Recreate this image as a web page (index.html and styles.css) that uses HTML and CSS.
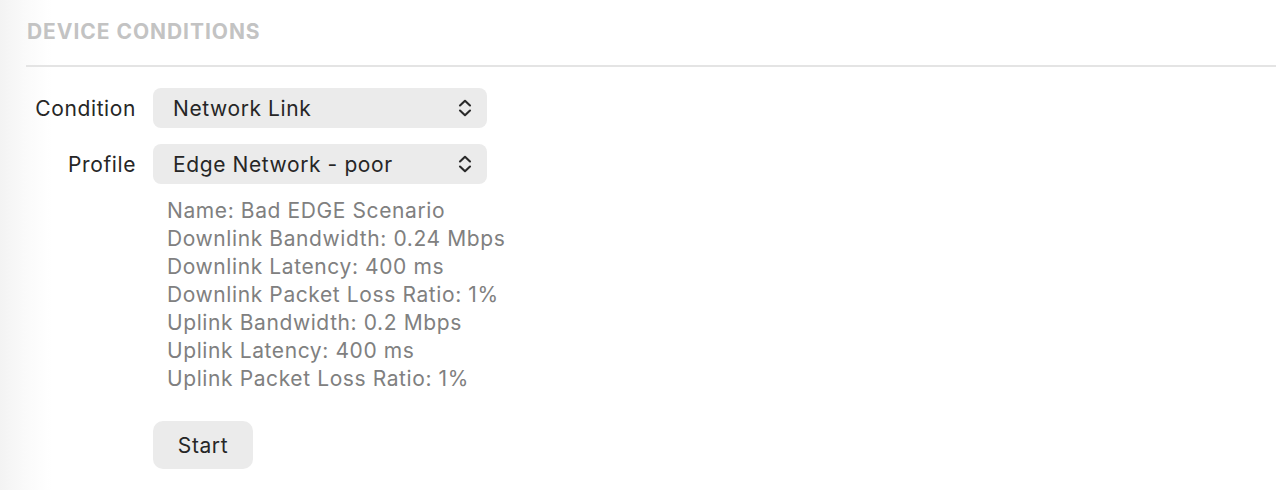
FILE: index.html
```html
<!DOCTYPE html>
<html>
<head>
<meta charset="utf-8">
<link rel="stylesheet" href="styles.css">
</head>
<body>
<div class="page">
  <h2 class="title">DEVICE CONDITIONS</h2>
  <div class="divider"></div>
  <div class="form">
    <div class="row">
      <span class="label">Condition</span>
      <div class="select"><span>Network Link</span>
        <svg class="chev" width="14" height="18" viewBox="0 0 14 18"><path d="M2 6.5 L7 1.8 L12 6.5 M2 11.5 L7 16.2 L12 11.5" fill="none" stroke="#2a2a2a" stroke-width="2.1" stroke-linecap="round" stroke-linejoin="round"/></svg>
      </div>
    </div>
    <div class="row">
      <span class="label">Profile</span>
      <div class="select"><span>Edge Network - poor</span>
        <svg class="chev" width="14" height="18" viewBox="0 0 14 18"><path d="M2 6.5 L7 1.8 L12 6.5 M2 11.5 L7 16.2 L12 11.5" fill="none" stroke="#2a2a2a" stroke-width="2.1" stroke-linecap="round" stroke-linejoin="round"/></svg>
      </div>
    </div>
    <div class="details">
      <div>Name: Bad EDGE Scenario</div>
      <div>Downlink Bandwidth: 0.24 Mbps</div>
      <div>Downlink Latency: 400 ms</div>
      <div>Downlink Packet Loss Ratio: 1%</div>
      <div>Uplink Bandwidth: 0.2 Mbps</div>
      <div>Uplink Latency: 400 ms</div>
      <div>Uplink Packet Loss Ratio: 1%</div>
    </div>
    <div class="actions">
      <button class="btn">Start</button>
    </div>
  </div>
</div>
</body>
</html>
```
FILE: styles.css
```css
html, body {
  margin: 0;
  padding: 0;
  height: 100%;
}
body {
  background: linear-gradient(to right, #f3f3f3 0px, #fafafa 25px, #ffffff 52px, #ffffff 100%);
  font-family: Inter, "Noto Sans", "Liberation Sans", sans-serif;
  color: #262626;
}
.page {
  padding: 19px 4px 0 26px;
}
.title {
  margin: 0 0 0 1px;
  font-size: 21px;
  font-weight: 700;
  line-height: 26px;
  color: #c3c3c3;
  letter-spacing: 0.95px;
}
.divider {
  height: 2px;
  background: #e4e4e4;
  margin-top: 20px;
}
.form {
  padding-top: 21px;
  display: flex;
  flex-direction: column;
  align-items: flex-start;
}
.row {
  display: flex;
  align-items: center;
}
.row + .row {
  margin-top: 16px;
}
.label {
  width: 110px;
  text-align: right;
  font-size: 21px;
  letter-spacing: 0.6px;
  padding-right: 17px;
  color: #262626;
}
.select {
  width: 334px;
  height: 40px;
  box-sizing: border-box;
  background: #ebebeb;
  border-radius: 8px;
  display: flex;
  align-items: center;
  justify-content: space-between;
  padding: 0 15px 0 20px;
  font-size: 21px;
  letter-spacing: 0.6px;
  color: #262626;
}
.chev {
  display: block;
}
.details {
  margin-left: 141px;
  margin-top: 13px;
  font-size: 21px;
  letter-spacing: 0.6px;
  line-height: 28px;
  color: #808080;
}
.actions {
  margin-left: 127px;
  margin-top: 28px;
}
.btn {
  display: block;
  width: 100px;
  height: 48px;
  border: none;
  border-radius: 10px;
  background: #ebebeb;
  font-family: inherit;
  font-size: 21px;
  letter-spacing: 0.6px;
  color: #262626;
  padding: 0;
}
```
